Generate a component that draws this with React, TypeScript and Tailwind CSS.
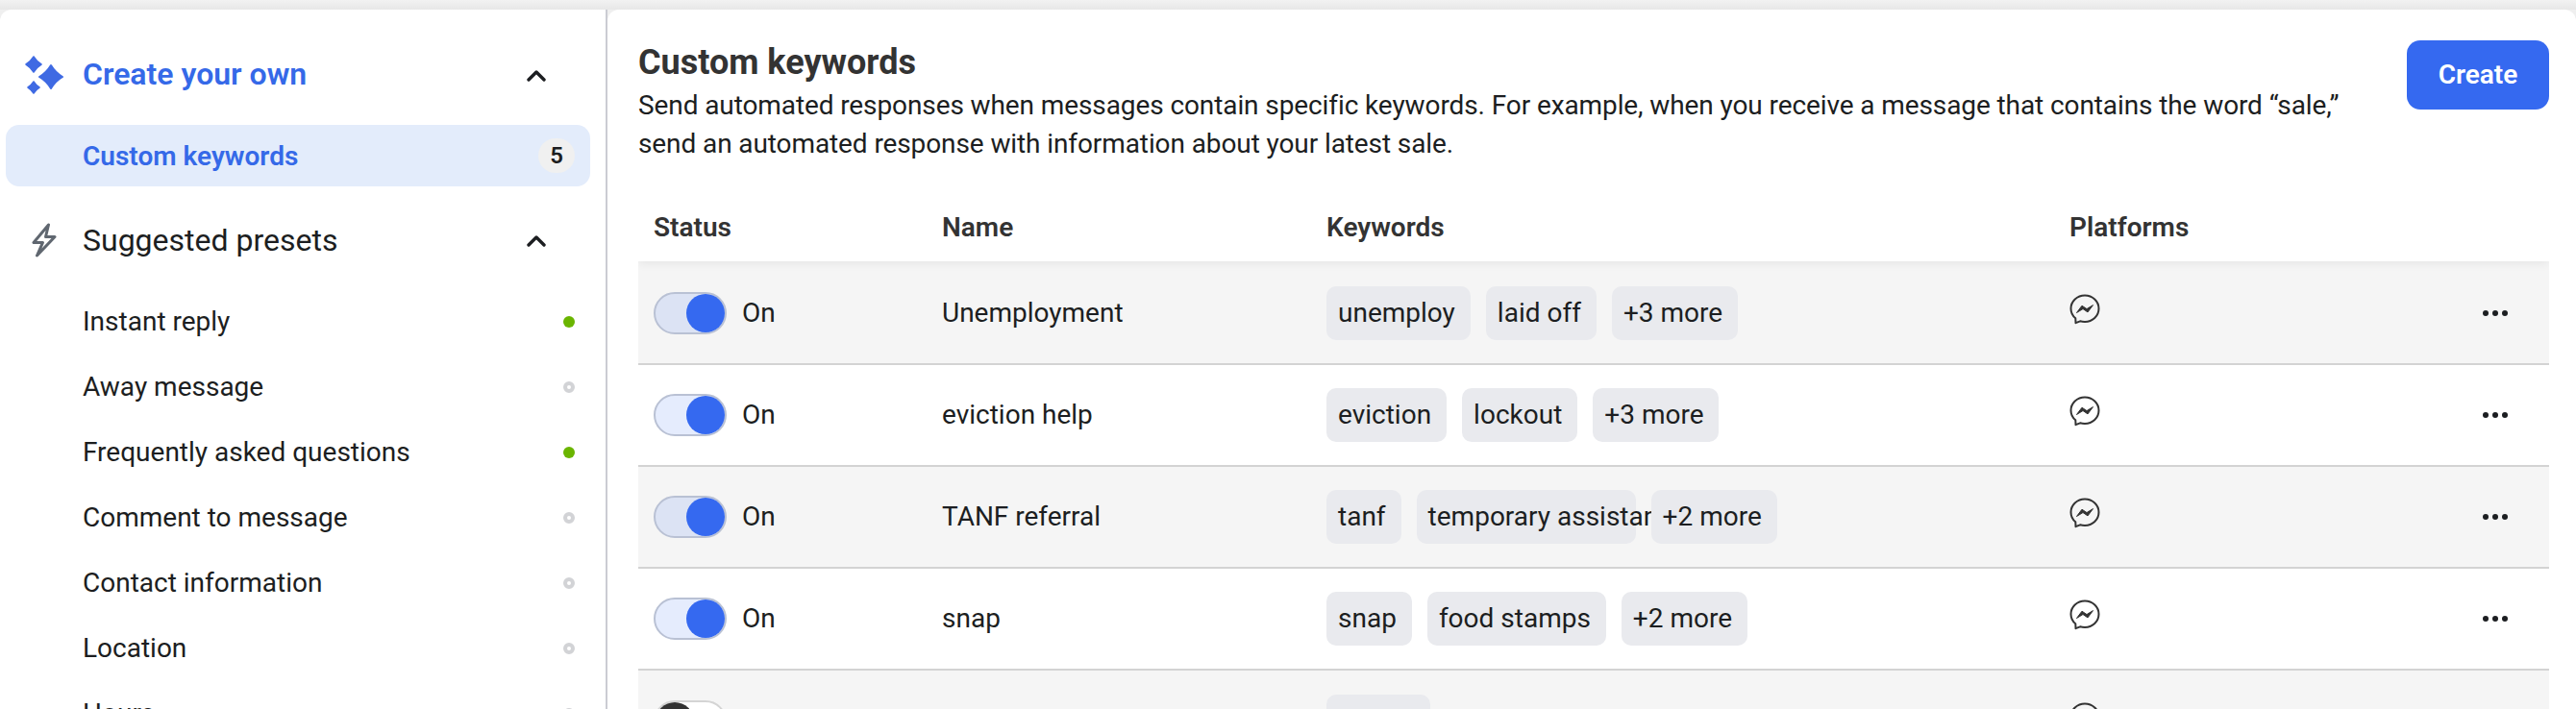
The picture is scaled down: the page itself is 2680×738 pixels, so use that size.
import React from 'react';

const presets = [
  { name: 'Instant reply', active: true },
  { name: 'Away message', active: false },
  { name: 'Frequently asked questions', active: true },
  { name: 'Comment to message', active: false },
  { name: 'Contact information', active: false },
  { name: 'Location', active: false },
  { name: 'Hours', active: false },
];

const rows = [
  { name: 'Unemployment', on: true, tags: [{ label: 'unemploy' }, { label: 'laid off' }, { label: '+3 more' }] },
  { name: 'eviction help', on: true, tags: [{ label: 'eviction' }, { label: 'lockout' }, { label: '+3 more' }] },
  { name: 'TANF referral', on: true, tags: [{ label: 'tanf' }, { label: 'temporary assistance', clip: true }, { label: '+2 more' }] },
  { name: 'snap', on: true, tags: [{ label: 'snap' }, { label: 'food stamps' }, { label: '+2 more' }] },
];

const Chevron = () => (
  <svg width="20" height="13" viewBox="0 0 20 13" fill="none" stroke="#1c1e21" strokeWidth="3.4" strokeLinecap="round" strokeLinejoin="round">
    <polyline points="2,11 10,3 18,11" />
  </svg>
);

const Sparkles = () => (
  <svg width="40" height="40" viewBox="0 0 40 40" fill="#3f6ae3" stroke="#3f6ae3" strokeLinejoin="round">
    <path strokeWidth="2" d="M27 10Q31.500 17.500 39 22Q31.500 26.500 27 34Q22.500 26.500 15 22Q22.500 17.500 27 10Z" />
    <path strokeWidth="1.500" d="M9 1Q12 6 17 9Q12 12 9 17Q6 12 1 9Q6 6 9 1Z" />
    <path strokeWidth="1.500" d="M9 27Q11.300 30.700 15 33Q11.300 35.300 9 39Q6.700 35.300 3 33Q6.700 30.700 9 27Z" />
  </svg>
);

const Bolt = () => (
  <svg width="26" height="36" viewBox="0 0 26 36" fill="none" stroke="#606770" strokeWidth="3" strokeLinejoin="round" strokeLinecap="round">
    <path d="M17.500 2 2 20.500h9.500L5.500 34 24 14.500h-9.500L17.500 2Z" />
  </svg>
);

const Messenger = () => (
  <svg width="32" height="32" viewBox="0 0 32 32" fill="none">
    <path d="M16 1.500C8 1.500 1.500 7.600 1.500 15.200c0 4 1.700 7.500 4.800 10l.2 5 4.600-1.900c1.500.4 3.200.6 4.900.6 8 0 14.500-6 14.500-13.700S24 1.500 16 1.500Z" stroke="#333" strokeWidth="2" strokeLinejoin="round" />
    <path d="M7.500 19.500 13 12.200l5 3.400 6.500-4-5.500 7.300-5-3.400-6.500 4Z" fill="#333" stroke="#333" strokeWidth="1" strokeLinejoin="round" />
  </svg>
);

const Dots = () => (
  <div className="flex gap-[4px]">
    <span className="h-[6px] w-[6px] rounded-full bg-[#1c1e21]" />
    <span className="h-[6px] w-[6px] rounded-full bg-[#1c1e21]" />
    <span className="h-[6px] w-[6px] rounded-full bg-[#1c1e21]" />
  </div>
);

export default function App() {
  return (
    <div className="flex h-[738px] w-full flex-col overflow-hidden bg-[#efefef] font-['Roboto',sans-serif] text-[28px] text-[#1c1e21]">
      <div className="h-[10px] shrink-0 bg-linear-to-b from-[#f2f2f2] to-[#e7e7e7]" />
      <div className="flex">
        <aside className="h-[800px] w-[632px] shrink-0 rounded-tl-[12px] border-r-2 border-[#cbccd3] bg-white pl-[6px] pr-[16px] pt-[36px]">
          <div className="flex h-[64px] items-center pr-[46px]">
            <div className="flex w-[80px] justify-center"><Sparkles /></div>
            <span className="-mt-[2px] flex-1 text-[32px] font-semibold text-[#3569e8]">Create your own</span>
            <Chevron />
          </div>
          <div className="mt-[20px] flex h-[64px] items-center rounded-[14px] bg-[#e3ecfb] pl-[80px] pr-[16px]">
            <span className="mt-[2px] flex-1 font-semibold text-[#3569e8]">Custom keywords</span>
            <span className="flex h-[36px] w-[38px] items-center justify-center rounded-full bg-[#f0f0f0] text-[24px] font-semibold">5</span>
          </div>
          <div className="mt-[24px] flex h-[64px] items-center pr-[46px]">
            <div className="flex w-[80px] justify-center"><Bolt /></div>
            <span className="flex-1 text-[32px]">Suggested presets</span>
            <Chevron />
          </div>
          <div className="mt-[19px]">
            {presets.map(p => (
              <div key={p.name} className="flex h-[68px] items-center pl-[80px] pr-[16px]">
                <span className="flex-1">{p.name}</span>
                {p.active ? (
                  <span className="h-[12px] w-[12px] rounded-full bg-[#6ab500]" />
                ) : (
                  <span className="h-[12px] w-[12px] rounded-full border-[4px] border-[#d2d3d6] bg-white" />
                )}
              </div>
            ))}
          </div>
        </aside>
        <main className="h-[800px] flex-1 rounded-t-[12px] bg-white pl-[32px] pr-[28px] pt-[32px]">
          <div className="flex h-[128px] items-start justify-between">
            <div>
              <h1 className="h-[46px] text-[36px] font-bold leading-[46px] text-[#333333]">Custom keywords</h1>
              <p className="mt-[2px] w-[1800px] leading-[40px] tracking-[-0.1px]">
                Send automated responses when messages contain specific keywords. For example, when you receive a message that contains the word “sale,” send an automated response with information about your latest sale.
              </p>
            </div>
            <button className="flex h-[72px] w-[148px] items-center justify-center rounded-[14px] bg-[#3569f0] font-semibold text-white">Create</button>
          </div>
          <div className="mt-[32px] overflow-hidden">
            <div className="relative z-10 grid h-[70px] grid-cols-[300px_400px_773px_1fr] items-center bg-white px-[16px] font-semibold text-[#333333] shadow-[0_2px_10px_rgba(0,0,0,0.07)]">
              <span>Status</span>
              <span>Name</span>
              <span>Keywords</span>
              <span>Platforms</span>
            </div>
            {rows.map((r, i) => (
              <div
                key={r.name}
                className={`grid grid-cols-[300px_400px_773px_1fr] items-center border-b-2 border-[#d3d3d3] px-[16px] ${i % 2 === 0 ? 'bg-[#f5f5f5]' : 'bg-white'} ${i === 0 ? 'h-[108px] pt-[2px]' : 'h-[106px]'}`}
              >
                <div className="flex items-center gap-[16px]">
                  <div className="flex h-[44px] w-[76px] items-center justify-end rounded-full border-2 border-[#b9c1d4] bg-[#3569f0]/13">
                    <div className="h-[40px] w-[40px] rounded-full bg-[#3569f0]" />
                  </div>
                  <span>On</span>
                </div>
                <span>{r.name}</span>
                <div className="flex gap-[16px]">
                  {r.tags.map(t => (
                    <span
                      key={t.label}
                      className={`flex h-[56px] shrink-0 items-center whitespace-nowrap rounded-[10px] bg-[#e9eaee] pl-[12px] pr-[16px] ${t.clip ? 'w-[228px]' : ''}`}
                    >
                      {t.label}
                    </span>
                  ))}
                </div>
                <div className="flex items-center justify-between pr-[27px]">
                  <div className="-mt-[8px]"><Messenger /></div>
                  <Dots />
                </div>
              </div>
            ))}
            <div className="grid h-[106px] grid-cols-[300px_400px_773px_1fr] items-center bg-[#f5f5f5] px-[16px]">
              <div className="flex h-[44px] w-[76px] items-center rounded-full border-2 border-[#d4d4d4] bg-white">
                <div className="h-[40px] w-[40px] rounded-full bg-[#333333]" />
              </div>
              <span />
              <div className="h-[56px] w-[108px] rounded-[10px] bg-[#e9eaee]" />
              <div className="-mt-[8px]"><Messenger /></div>
            </div>
          </div>
        </main>
      </div>
    </div>
  );
}
